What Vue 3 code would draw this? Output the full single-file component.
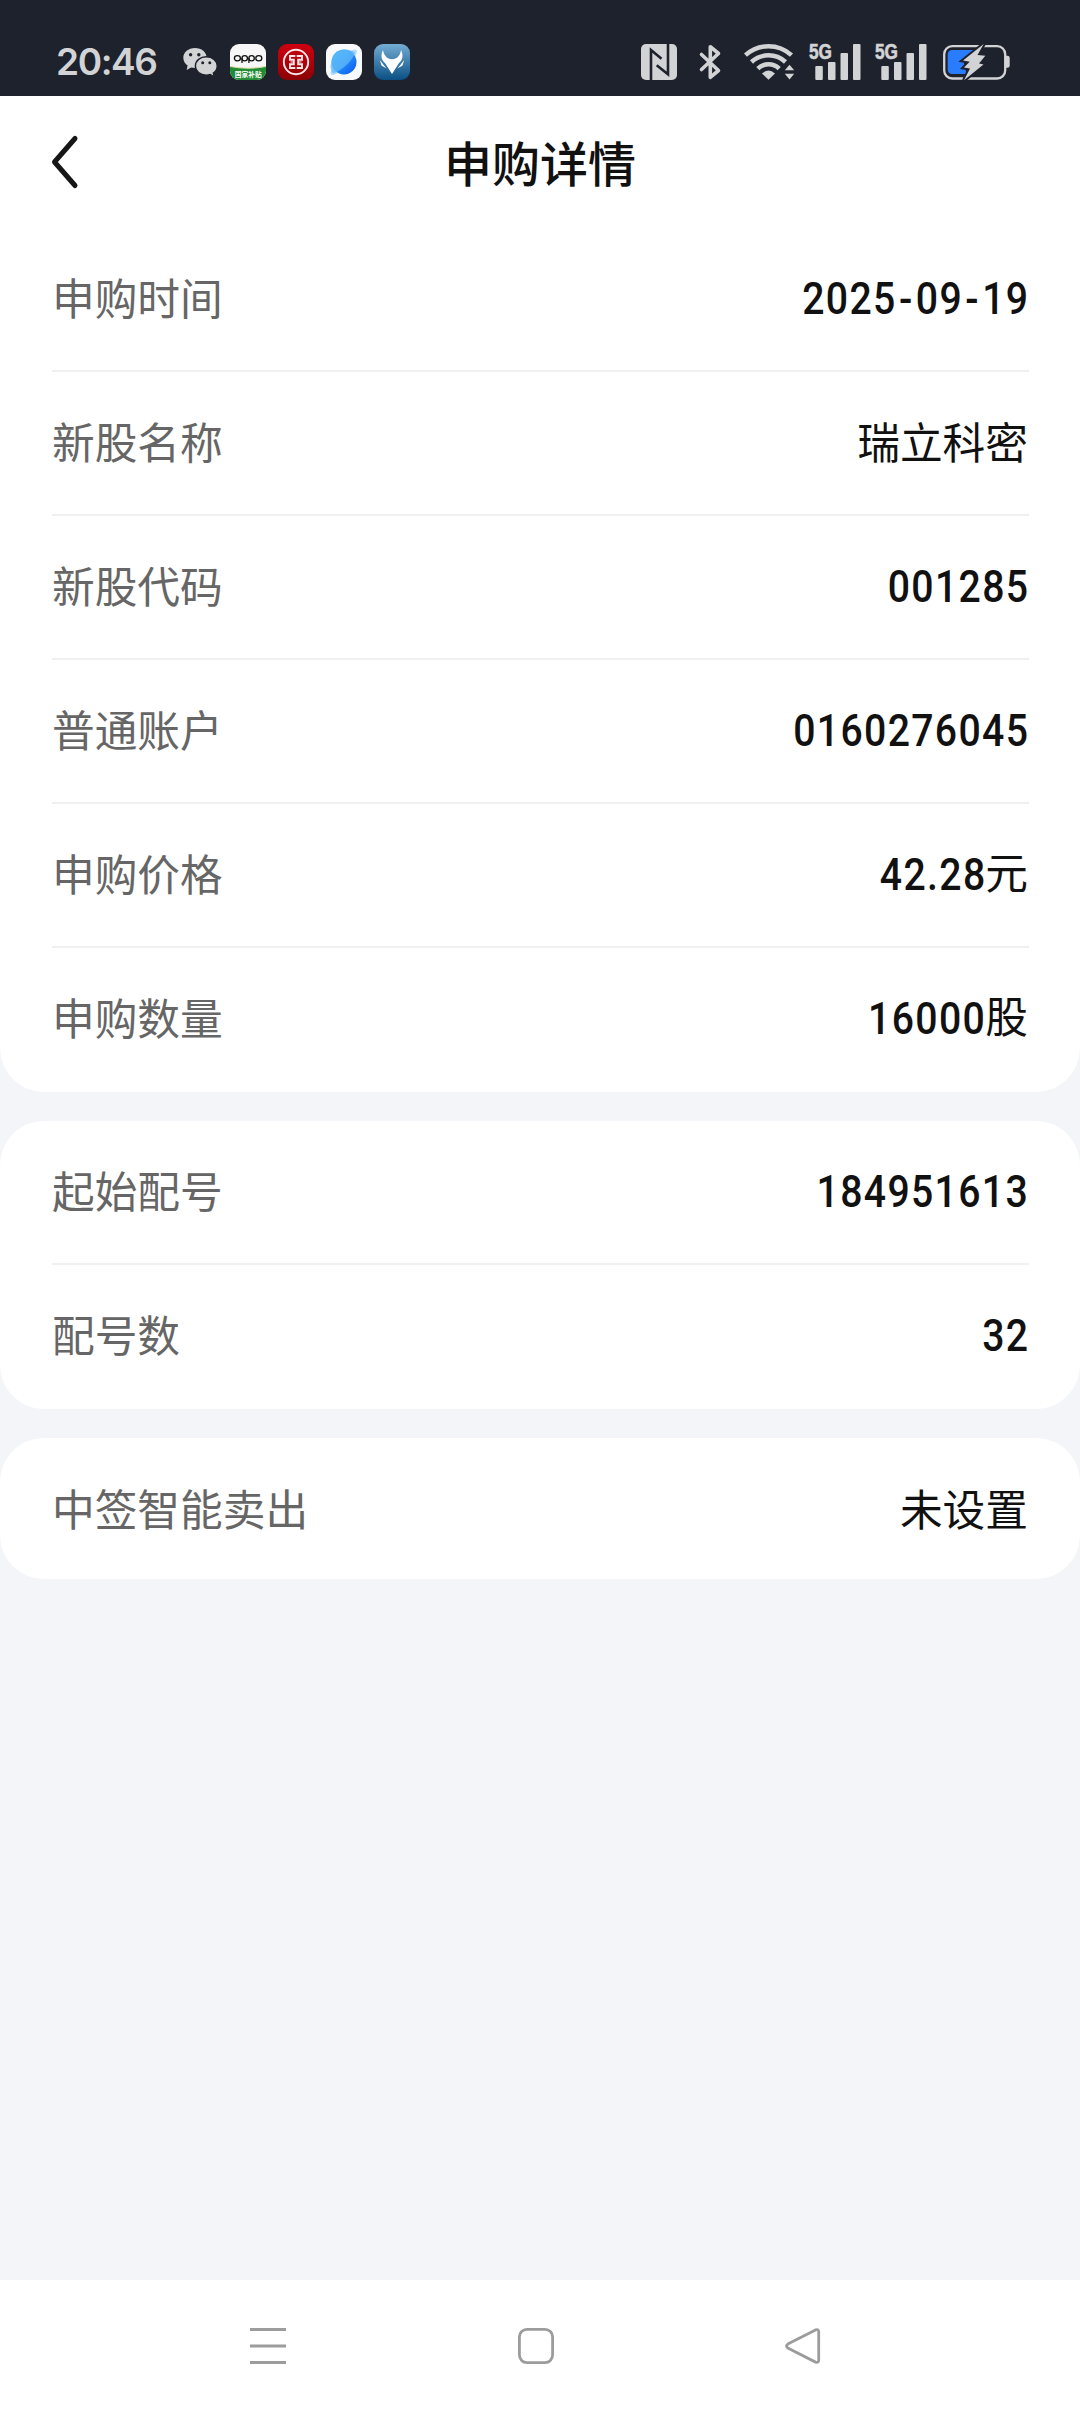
<script setup>
const groups = [
  [
    { label: '申购时间', value: '2025-09-19' },
    { label: '新股名称', unit: '瑞立科密' },
    { label: '新股代码', value: '001285' },
    { label: '普通账户', value: '0160276045' },
    { label: '申购价格', value: '42.28', unit: '元' },
    { label: '申购数量', value: '16000', unit: '股' }
  ],
  [
    { label: '起始配号', value: '184951613' },
    { label: '配号数', value: '32' }
  ],
  [
    { label: '中签智能卖出', unit: '未设置' }
  ]
]

// keep the separators as their own pieces so they can be spaced apart
const pieces = (value) => value.split(/([-.])/)
</script>

<template>
  <div class="page">
    <div class="status-bar">
      <span class="clock">20:46</span>
      <div class="apps">
        <svg class="wechat" width="35" height="36" viewBox="0 0 35 36">
          <path fill="#d2d3d5" d="M12 4C5.300 4 0.300 8.300 0.300 13.800c0 3.200 1.700 5.900 4.300 7.700L3.600 26l4.600-2.600c1.200.3 2.500.5 3.800.5 6.500 0 11.700-4.500 11.700-10.100S18.500 4 12 4z" />
          <path fill="#d2d3d5" stroke="#1e222d" stroke-width="1.400" d="M23.300 12.700c-6.100 0-10.900 4-10.900 9.200s4.800 9.200 10.900 9.200c1.400 0 2.700-.2 3.900-.6l4.100 2.300-1-3.700c2.400-1.700 3.900-4.300 3.900-7.200 0-5.200-4.900-9.200-10.900-9.200z" />
          <g fill="#1e222d">
            <circle cx="7.600" cy="10.800" r="1.700" />
            <circle cx="15.800" cy="10.800" r="1.700" />
            <circle cx="19.700" cy="18.800" r="1.500" />
            <circle cx="26.800" cy="18.800" r="1.500" />
          </g>
        </svg>
        <svg width="36" height="36" viewBox="0 0 36 36">
          <defs>
            <clipPath id="oppoClip"><rect width="36" height="36" rx="9" /></clipPath>
          </defs>
          <g clip-path="url(#oppoClip)">
            <rect width="36" height="36" fill="#f7f7f7" />
            <path d="M0 22.500Q18 26 36 22.500V36H0z" fill="#238a35" />
            <path d="M0 22.500Q18 26 36 22.500" fill="none" stroke="#d9dfa0" stroke-width="1" />
          </g>
          <g fill="none" stroke="#111" stroke-width="1.300">
            <ellipse cx="7.400" cy="14.300" rx="3" ry="2.600" />
            <ellipse cx="14.700" cy="14.300" rx="2.700" ry="2.600" />
            <path d="M12 14v5" />
            <ellipse cx="21.600" cy="14.300" rx="2.700" ry="2.600" />
            <path d="M18.900 14v5" />
            <ellipse cx="28.800" cy="14.300" rx="3" ry="2.600" />
          </g>
          <text class="oppo-text" x="4.700" y="32.600" textLength="27" lengthAdjust="spacingAndGlyphs">国家补贴</text>
        </svg>
        <svg width="36" height="36" viewBox="0 0 36 36">
          <defs>
            <linearGradient id="bank" x1="0" y1="0" x2="0" y2="1">
              <stop offset="0" stop-color="#cf0010" />
              <stop offset="1" stop-color="#8c0205" />
            </linearGradient>
          </defs>
          <rect width="36" height="36" rx="9" fill="url(#bank)" />
          <circle cx="18" cy="18" r="12.200" fill="none" stroke="#f6e8e8" stroke-width="1.900" />
          <g fill="none" stroke="#f6e8e8" stroke-width="1.900">
            <path d="M17.300 12H12V15.800H15.800V20.200H12V24H17.300" />
            <path d="M18.700 12H24V15.800H20.200V20.200H24V24H18.700" />
            <path d="M12.500 18H15.800M20.200 18H23.500" stroke-width="1.200" />
          </g>
        </svg>
        <svg width="36" height="36" viewBox="0 0 36 36">
          <defs>
            <linearGradient id="planet" x1="0" y1="0" x2="1" y2="1">
              <stop offset="0" stop-color="#3cc4ff" />
              <stop offset="1" stop-color="#0a55f0" />
            </linearGradient>
          </defs>
          <rect width="36" height="36" rx="9" fill="#f8f9fb" />
          <path d="M5 30.500C3.500 28 7 22 14 15S28.500 4 30.500 6 28 15 21 22 7.500 32 5 30.500z" fill="#b4dcfb" />
          <circle cx="18" cy="18" r="12.500" fill="url(#planet)" />
          <path d="M29 8.500C27 16 17 26 7 29.500A12.500 12.500 0 0 1 5.600 17.500C7 11 12 6 18 5.500 23 5.500 26 6.500 29 8.500z" fill="#62b9fa" opacity=".75" />
        </svg>
        <svg width="36" height="36" viewBox="0 0 36 36">
          <defs>
            <linearGradient id="fox" x1="0" y1="0" x2="0" y2="1">
              <stop offset="0" stop-color="#74acd3" />
              <stop offset="1" stop-color="#0a4f84" />
            </linearGradient>
          </defs>
          <rect width="36" height="36" rx="9" fill="url(#fox)" />
          <path fill="#fff" d="M9 6C9.500 10.500 12.500 13.500 14.500 14.500 17 15.500 19 15.500 21.500 14.500 24 13.500 26.500 10.500 27 6 29.500 11 29 15.500 25 19L18 30 11 19C7 15.500 6.500 11 9 6z" />
          <path fill="#fff" d="M5.800 16 12.500 24.500 7.500 21.500zM30.200 16 23.500 24.500 28.500 21.500z" />
        </svg>
      </div>

      <div class="indicators">
        <svg class="nfc" width="36" height="36" viewBox="0 0 36 36">
          <rect width="36" height="36" rx="5" fill="#d2d3d5" />
          <path d="M10 36V6L20.500 14.800M27 0V30.300L15.700 21.300" fill="none" stroke="#1e222d" stroke-width="2.600" />
        </svg>
        <svg class="bt" width="21" height="36" viewBox="0 0 21 36">
          <path d="M1.500 10.500 18.500 26.500 10.300 33.300V2.700L18.500 9.500 1.500 25.500" fill="none" stroke="#d2d3d5" stroke-width="3.600" stroke-linecap="round" stroke-linejoin="round" />
        </svg>
        <svg class="wifi" width="51" height="36" viewBox="0 0 51 36">
          <g fill="none" stroke="#d2d3d5" stroke-width="4.500">
            <path d="M1.500 11.200A34 34 0 0 1 47.500 11.200" />
            <path d="M7.500 18A25 25 0 0 1 41.500 18" />
            <path d="M13.800 24.600A15.500 15.500 0 0 1 35.200 24.600" />
          </g>
          <path fill="#d2d3d5" d="M18 29.500Q24.500 23.500 31 29.500L24.500 35.800z" />
          <path fill="#d2d3d5" d="M40.800 26.200 45.500 20.800 50.200 26.200zM40.800 29.800 45.500 35.400 50.200 29.800z" />
        </svg>
        <svg v-for="n in 2" :key="n" class="signal" width="52" height="36" viewBox="0 0 52 36">
          <text class="net" x="0" y="15" textLength="23" lengthAdjust="spacingAndGlyphs">5G</text>
          <g fill="#d2d3d5">
            <rect x="6.300" y="22" width="7.500" height="14" rx="1" />
            <rect x="19" y="18" width="7.500" height="18" rx="1" />
            <rect x="31.500" y="9" width="7.500" height="27" rx="1" />
            <rect x="44" y="0" width="7.500" height="36" rx="1" />
          </g>
        </svg>
        <svg class="battery" width="67" height="37" viewBox="0 0 67 37">
          <rect x="1.200" y="2.200" width="61" height="32.300" rx="8" fill="none" stroke="#d2d3d5" stroke-width="2.300" />
          <path d="M63 11.700h1.500a2.200 2.200 0 0 1 2.200 2.200v7.600a2.200 2.200 0 0 1-2.200 2.200H63z" fill="#d2d3d5" />
          <path d="M9 6H31L21 16V22L24 30H9a4.300 4.300 0 0 1-4.300-4.300V10.300A4.300 4.300 0 0 1 9 6z" fill="#2a7cff" />
          <path class="bolt" d="M40.700 0 34.500 11 42.300 11.700 36 19.500 40.500 20.500 21 36.300 27 24.500 21 23.600 26.700 17.700 20 16.500z" />
        </svg>
      </div>
    </div>

    <div class="header">
      <svg class="back" width="30" height="56" viewBox="0 0 30 56">
        <path d="M25 4.500 4.500 28 25 51.500" />
      </svg>
      <h1>申购详情</h1>
    </div>

    <div class="content">
      <div class="card" v-for="(rows, idx) in groups" :key="idx">
        <div class="row" v-for="row in rows" :key="row.label">
          <span class="label">{{ row.label }}</span>
          <span class="value"><span v-if="row.value" class="num"><span v-for="(piece, i) in pieces(row.value)" :key="i" :class="{ dash: piece === '-' }">{{ piece }}</span></span><span v-if="row.unit">{{ row.unit }}</span></span>
        </div>
      </div>
    </div>

    <div class="nav-bar">
      <svg width="36" height="36" viewBox="0 0 36 36">
        <path d="M0 1.500H36M0 18H36M0 34.500H36" />
      </svg>
      <svg width="36" height="36" viewBox="0 0 36 36">
        <rect x="1.400" y="1.400" width="33.200" height="33.200" rx="7.500" />
      </svg>
      <svg width="36" height="36" viewBox="0 0 36 36">
        <path d="M30.500 1.900 3.300 15.700Q-.4 18 3.300 20.300L30.500 34.100Q33.700 35.200 33.700 32V4Q33.700.8 30.500 1.900z" />
      </svg>
    </div>
  </div>
</template>

<style>
body { margin: 0; background: #f3f5f9; }
</style>

<style scoped>
.page {
  display: flex;
  flex-direction: column;
  width: 1080px;
  height: 2412px;
  background: #f3f5f9;
  font-family: "Noto Sans CJK SC", sans-serif;
  color: #111;
}
svg { display: block; flex: none; overflow: visible; }

.status-bar {
  display: flex;
  align-items: flex-start;
  box-sizing: border-box;
  height: 96px;
  padding: 44px 70px 0 56px;
  background: #1e222d;
}
.clock {
  width: 127px;
  font: 600 37px/36px Inter, sans-serif;
  letter-spacing: -1.4px;
  color: #d2d3d5;
}
.apps { display: flex; gap: 12px; }
.oppo-text { font: 700 7px "Noto Sans CJK SC", sans-serif; fill: #fff; }
.indicators { display: flex; margin-left: auto; }
.bt { margin-left: 23px; }
.wifi { margin-left: 23px; }
.signal { margin-left: 14px; }
.battery { margin-left: 16px; }
.net {
  font: 700 21.5px "Liberation Sans", sans-serif;
  fill: #d2d3d5;
  stroke: #d2d3d5;
  stroke-width: .6px;
}
.bolt { fill: #d2d3d5; stroke: #1e222d; stroke-width: 4px; paint-order: stroke; }

.header {
  display: grid;
  grid-template-columns: 80px 1fr 80px;
  align-items: center;
  height: 132px;
  background: #fff;
}
.back { margin-left: 50px; }
.back path {
  fill: none;
  stroke: #161616;
  stroke-width: 5px;
  stroke-linecap: round;
  stroke-linejoin: round;
}
h1 {
  margin: 0;
  padding-bottom: 3px;
  font-size: 48px;
  font-weight: 500;
  text-align: center;
}

.content { display: flex; flex: 1; flex-direction: column; gap: 29px; }
.card { padding: 0 51px 0 52px; background: #fff; border-radius: 44px; }
.card:first-child { border-radius: 0 0 44px 44px; }
.row {
  display: flex;
  justify-content: space-between;
  align-items: center;
  box-sizing: border-box;
  height: 144px;
  padding: 0 1px 6px 0;
  border-bottom: 2px solid #f0f0f0;
  font-size: 42.7px;
  line-height: 60px;
}
.row:last-child { padding-bottom: 8px; border-bottom: none; }
.row:only-child { height: 141px; padding-bottom: 3px; }
.label { color: #666; }
.num {
  display: inline-block;
  margin-right: -1px;
  font: 500 43.5px/60px Roboto, sans-serif;
  letter-spacing: 1.5px;
  transform: translateY(1px) scaleX(.9);
  transform-origin: right;
}
.dash { padding: 0 2.5px; }

.nav-bar {
  display: flex;
  justify-content: space-between;
  box-sizing: border-box;
  height: 132px;
  padding: 48px 259px 0 250px;
  background: #fff;
}
.nav-bar svg { fill: none; stroke: #9c9c9c; stroke-width: 2.800px; }
</style>
